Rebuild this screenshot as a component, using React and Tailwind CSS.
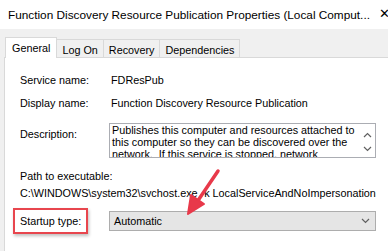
function Chevron({ up }) {
  return (
    <svg width="9" height="6" viewBox="0 0 9 6" className="block">
      <path
        d={up ? "M1 5 L4.5 1.5 L8 5" : "M1 1 L4.5 4.5 L8 1"}
        fill="none"
        stroke="#606060"
        strokeWidth="1.2"
      />
    </svg>
  )
}

function Row({ label, children, className = "" }) {
  return (
    <div className={"flex " + className}>
      <div className="w-[89px] shrink-0">{label}</div>
      <div className="pl-[2px] whitespace-nowrap">{children}</div>
    </div>
  )
}

export default function App() {
  return (
    <div className="relative w-[388px] h-[251px] overflow-hidden bg-[#f0f0f0] text-black font-['Liberation_Sans',Arial,sans-serif] text-[10.8px] leading-[14px]">
      {/* title bar */}
      <div className="relative h-[29px] bg-white flex items-center pl-[8px] text-[11.8px] whitespace-nowrap">
        Function Discovery Resource Publication Properties (Local Comput...
        <span className="absolute left-[379px] top-[7px] text-[13px]">✕</span>
      </div>

      {/* tabs */}
      <div className="flex items-end pl-[5px] h-[29px] -mb-px relative z-10">
        <div className="h-[21px] px-[6px] pt-[3px] bg-white border border-b-0 border-[#d9d9d9]">General</div>
        <div className="h-[19px] px-[5px] pt-[3px] border-t border-r border-[#d9d9d9]">Log On</div>
        <div className="h-[19px] px-[5px] pt-[3px] border-t border-r border-[#d9d9d9]">Recovery</div>
        <div className="h-[19px] px-[5px] pt-[3px] border-t border-r border-[#d9d9d9]">Dependencies</div>
      </div>

      {/* panel */}
      <div className="ml-[4px] h-[200px] bg-white border-l border-t border-[#d9d9d9] pl-[15px] pt-[15px]">
        <Row label="Service name:">FDResPub</Row>
        <Row label="Display name:" className="mt-[9px]">
          Function Discovery Resource Publication
        </Row>

        <div className="flex mt-[13px]">
          <div className="w-[89px] shrink-0 pt-[4px]">Description:</div>
          <div className="w-[267px] h-[35px] border border-[#abadb3] flex overflow-hidden">
            <div className="flex-1 pl-[2px] leading-[12px] whitespace-nowrap">
              <div>Publishes this computer and resources attached to</div>
              <div>this computer so they can be discovered over the</div>
              <div>network.&nbsp; If this service is stopped, network</div>
            </div>
            <div className="w-[16px] flex flex-col items-center pt-[8px] gap-[8px]">
              <Chevron up />
              <Chevron />
            </div>
          </div>
        </div>

        <div className="mt-[11px]">Path to executable:</div>
        <div className="mt-[3px] whitespace-nowrap">
          C:\WINDOWS\system32\svchost.exe -k LocalServiceAndNoImpersonation
        </div>

        <div className="flex items-center mt-[11px]">
          <div className="w-[89px] shrink-0">Startup type:</div>
          <div className="w-[267px] h-[20px] bg-[#e5e5e5] border border-[#adadad] flex items-center pl-[4px] pr-[5px]">
            <span className="flex-1">Automatic</span>
            <Chevron />
          </div>
        </div>
      </div>

      {/* red highlight box */}
      <div className="absolute left-[13px] top-[208px] w-[75px] h-[26px] border-2 border-[#e8464e] shadow-[1px_2px_3px_rgba(0,0,0,0.25)]" />

      {/* red arrow */}
      <svg className="absolute left-0 top-0" width="388" height="251" viewBox="0 0 388 251">
        <line x1="218" y1="171" x2="197" y2="202" stroke="#e8394a" strokeWidth="3.5" strokeLinecap="round" />
        <polygon points="188,214 191,195 204,204" fill="#e8394a" stroke="#e8394a" strokeWidth="2" strokeLinejoin="round" />
      </svg>
    </div>
  )
}
